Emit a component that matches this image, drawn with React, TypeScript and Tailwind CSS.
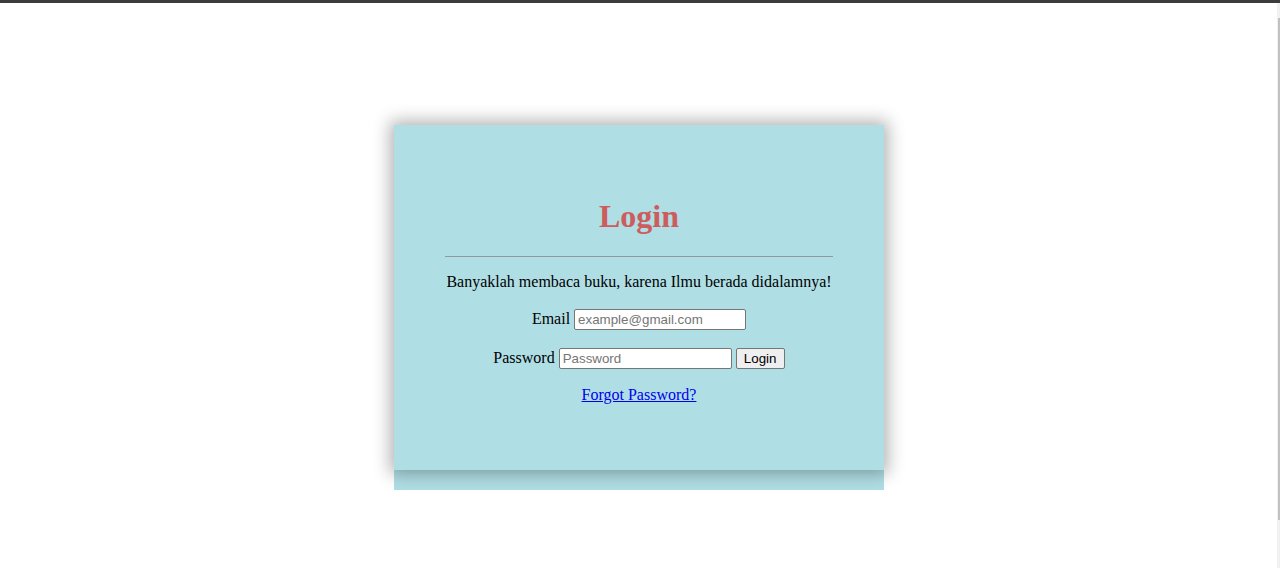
export default function App() {
  return (
    <div className="relative min-h-[568px] w-full bg-white font-['Liberation_Serif',serif] text-black">
      {/* browser top edge */}
      <div className="h-[3px] w-full bg-[#3c3c3c]" />

      {/* scrollbar strip on the right */}
      <div className="absolute right-0 top-[3px] h-[565px] w-[3px] bg-[#f1f1f1]">
        <div className="ml-[1px] mt-[15px] h-[502px] w-[2px] bg-[#c1c1c1]" />
      </div>

      <div className="flex justify-center pr-[2px] pt-[122px]">
        <div className="w-[490px] bg-[#b0dee5] pb-[20px]">
          <div className="flex flex-col items-center bg-[#b0dee5] px-[50px] pt-[73px] pb-[66px] shadow-[0_0_16px_4px_rgba(0,0,0,0.3)]">
            <h1 className="h-[37px] text-[32px] font-bold leading-[37px] text-[#cd5c5c]">Login</h1>
            <hr className="mt-[21px] w-[388px] border-t border-[#8f9a9c]" />
            <p className="mt-[16px] text-[16px] leading-[18px]">
              Banyaklah membaca buku, karena Ilmu berada didalamnya!
            </p>
            <div className="mt-[16px] flex items-center gap-[4px] text-[16px]">
              <label>Email</label>
              <input
                type="text"
                placeholder="example@gmail.com"
                className="h-[21px] w-[172px] rounded-[2px] border border-[#767676] bg-white px-[3px] font-['Liberation_Sans',sans-serif] text-[13.33px] placeholder:text-[#757575]"
              />
            </div>
            <div className="mt-[15px] flex items-center gap-[4px] text-[16px]">
              <label>Password</label>
              <input
                type="password"
                placeholder="Password"
                className="h-[21px] w-[173px] rounded-[2px] border border-[#767676] bg-white px-[3px] font-['Liberation_Sans',sans-serif] text-[13.33px] placeholder:text-[#757575]"
              />
              <button className="h-[21px] w-[49px] rounded-[2px] border border-[#767676] bg-[#efefef] font-['Liberation_Sans',sans-serif] text-[13.33px] leading-[19px]">
                Login
              </button>
            </div>
            <a href="#" className="mt-[16px] text-[16px] leading-[18px] text-[#0000ee] underline">
              Forgot Password?
            </a>
          </div>
        </div>
      </div>
    </div>
  )
}
